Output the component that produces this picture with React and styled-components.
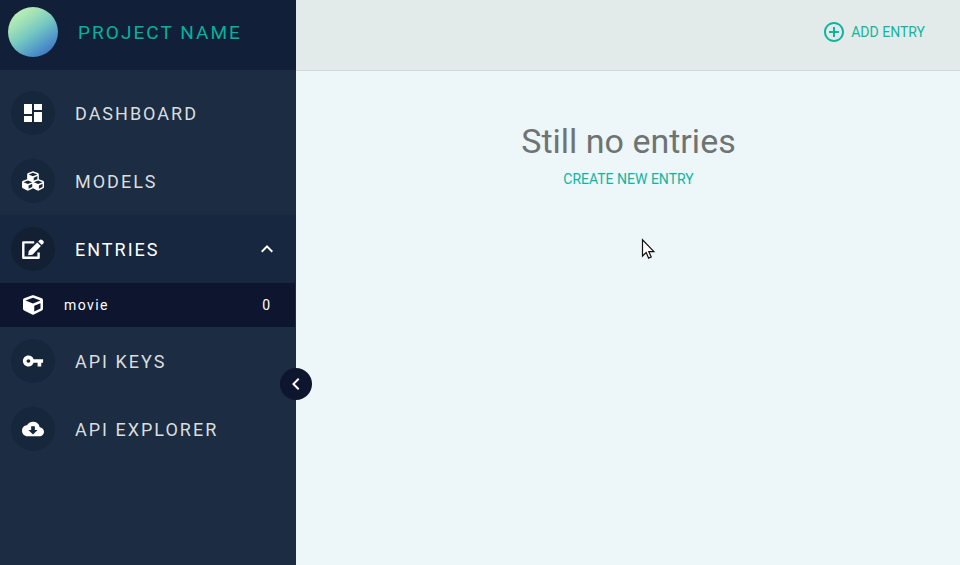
import React from "react";
import styled, { createGlobalStyle } from "styled-components";
import {
  MdDashboard,
  MdVpnKey,
  MdCloudDownload,
  MdKeyboardArrowUp,
  MdKeyboardArrowLeft,
  MdAddCircleOutline,
} from "react-icons/md";
import { FaCubes, FaCube } from "react-icons/fa";

const GlobalStyle = createGlobalStyle`
  *, *::before, *::after { box-sizing: border-box; }
  body { margin: 0; font-family: Roboto, sans-serif; overflow: hidden; }
`;

const Page = styled.div`
  display: flex;
  height: 100vh;
  background: #edf6f8;
`;

const Sidebar = styled.aside`
  position: relative;
  flex: 0 0 296px;
  display: flex;
  flex-direction: column;
  background: #1b2c43;
`;

const Brand = styled.header`
  display: flex;
  align-items: center;
  height: 70px;
  padding: 0 8px 6px;
  background: #112038;
`;

const Avatar = styled.div`
  width: 50px;
  height: 50px;
  border-radius: 50%;
  background: linear-gradient(145deg, #bdf0b4 12%, #9fe0b8 30%, #76c8c0 50%, #559fc8 70%, #3b6fc4 92%);
`;

const ProjectName = styled.h1`
  margin: 2px 0 0 20px;
  font-size: 19px;
  font-weight: 400;
  line-height: 24px;
  letter-spacing: 2.05px;
  color: #00b39d;
`;

const Nav = styled.nav`
  display: flex;
  flex-direction: column;
  padding-top: 9px;
`;

const NavItem = styled.a`
  display: flex;
  align-items: center;
  height: 68px;
  padding: 0 17px 0 11px;
  color: ${(p) => (p.$active ? "#ffffff" : "#dadddf")};
  background: ${(p) => (p.$active ? "#17273f" : "transparent")};
`;

const IconDisc = styled.span`
  display: flex;
  align-items: center;
  justify-content: center;
  width: 44px;
  height: 44px;
  border-radius: 50%;
  color: #fff;
  background: ${(p) => (p.$active ? "#132034" : "#16263b")};
`;

const NavLabel = styled.span`
  flex: 1;
  margin: 2px 0 0 20px;
  font-size: 18px;
  line-height: 24px;
  letter-spacing: 2px;
`;

const SubItem = styled.a`
  display: flex;
  align-items: center;
  height: 44px;
  padding: 0 25px 0 23px;
  margin-right: 1px;
  color: #fff;
  background: #0e152e;
  font-size: 14px;
`;

const SubLabel = styled.span`
  flex: 1;
  margin-left: 21px;
  letter-spacing: 1.4px;
`;

const CollapseButton = styled.button`
  position: absolute;
  top: 368px;
  right: -16px;
  display: flex;
  align-items: center;
  justify-content: center;
  width: 32px;
  height: 32px;
  padding: 0;
  border: 0;
  border-radius: 50%;
  color: #fff;
  background: #0e152e;
`;

const Main = styled.main`
  flex: 1;
  display: flex;
  flex-direction: column;
`;

const Toolbar = styled.div`
  display: flex;
  align-items: center;
  justify-content: flex-end;
  height: 71px;
  padding: 0 35px 6px 0;
  border-bottom: 1px solid #d3dbda;
  background: #e3ebea;
`;

const TextButton = styled.button`
  display: flex;
  align-items: center;
  gap: 5px;
  padding: 0;
  border: 0;
  background: none;
  color: #0fb5a2;
  font: 400 14px/20px Roboto, sans-serif;
`;

const EmptyState = styled.section`
  display: flex;
  flex-direction: column;
  align-items: center;
  padding: 50px 0 0 1px;
`;

const EmptyTitle = styled.h2`
  margin: 0 0 8px;
  font-size: 34px;
  font-weight: 400;
  line-height: 40px;
  color: #707373;
`;

const Pointer = styled.svg`
  position: absolute;
  left: 641px;
  top: 238px;
`;

function EditIcon() {
  return (
    <svg width="22" height="20" viewBox="0 0 22 20">
      <path
        d="M12.2 3.4H1.3v15.3h15.3v-5.2"
        fill="none"
        stroke="currentColor"
        strokeWidth="2.4"
        strokeLinejoin="round"
      />
      <path
        d="M6.2 16.2l.5-4.2 8.5-8.6 3.7 3.7-8.5 8.6zM16.2 2.4l1.5-1.5c.7-.7 1.7-.7 2.4 0l1.2 1.2c.7.7.7 1.7 0 2.4l-1.5 1.5z"
        fill="currentColor"
      />
    </svg>
  );
}

export default function App() {
  return (
    <Page>
      <GlobalStyle />
      <Sidebar>
        <Brand>
          <Avatar />
          <ProjectName>PROJECT NAME</ProjectName>
        </Brand>
        <Nav>
          <NavItem>
            <IconDisc><MdDashboard size={24} /></IconDisc>
            <NavLabel>DASHBOARD</NavLabel>
          </NavItem>
          <NavItem>
            <IconDisc><FaCubes size={22} /></IconDisc>
            <NavLabel>MODELS</NavLabel>
          </NavItem>
          <NavItem $active>
            <IconDisc $active><EditIcon /></IconDisc>
            <NavLabel>ENTRIES</NavLabel>
            <MdKeyboardArrowUp size={24} />
          </NavItem>
          <SubItem>
            <FaCube size={20} />
            <SubLabel>movie</SubLabel>
            <span>0</span>
          </SubItem>
          <NavItem>
            <IconDisc><MdVpnKey size={22} /></IconDisc>
            <NavLabel>API KEYS</NavLabel>
          </NavItem>
          <NavItem>
            <IconDisc><MdCloudDownload size={22} /></IconDisc>
            <NavLabel>API EXPLORER</NavLabel>
          </NavItem>
        </Nav>
        <CollapseButton aria-label="Collapse sidebar">
          <MdKeyboardArrowLeft size={24} />
        </CollapseButton>
      </Sidebar>
      <Main>
        <Toolbar>
          <TextButton>
            <MdAddCircleOutline size={24} />
            ADD ENTRY
          </TextButton>
        </Toolbar>
        <EmptyState>
          <EmptyTitle>Still no entries</EmptyTitle>
          <TextButton>CREATE NEW ENTRY</TextButton>
        </EmptyState>
      </Main>
      <Pointer width="15" height="23" viewBox="0 0 15 23">
        <path
          d="M1.5 1.8V18l3.7-3.5 2.4 5.6 2.6-1.1-2.4-5.4h5.1z"
          fill="#fff"
          stroke="#111"
          strokeWidth="1.2"
        />
      </Pointer>
    </Page>
  );
}
